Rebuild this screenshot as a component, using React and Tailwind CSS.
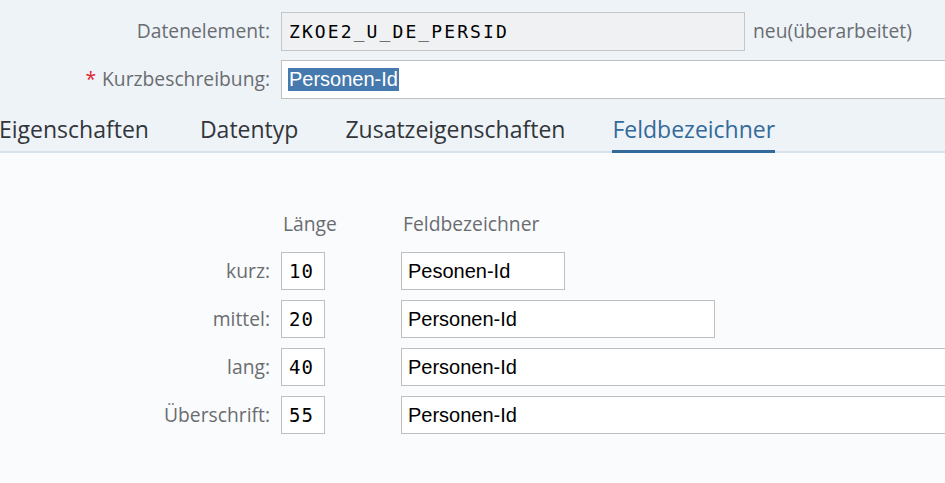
import React from 'react';

const sans = { fontFamily: '"Open Sans", "Noto Sans", sans-serif' };

const rows = [
  { label: 'kurz:', len: '10', text: 'Pesonen-Id', w: 'w-[164px]' },
  { label: 'mittel:', len: '20', text: 'Personen-Id', w: 'w-[314px]' },
  { label: 'lang:', len: '40', text: 'Personen-Id', w: 'w-[600px]' },
  { label: 'Überschrift:', len: '55', text: 'Personen-Id', w: 'w-[600px]' },
];

const tabs = [
  { t: 'Eigenschaften', ml: '' },
  { t: 'Datentyp', ml: 'ml-[51px]' },
  { t: 'Zusatzeigenschaften', ml: 'ml-[47px]' },
  { t: 'Feldbezeichner', ml: 'ml-[47px]' },
];

export default function App() {
  return (
    <div className="w-[945px] h-[483px] overflow-hidden bg-[#fafbfd]" style={sans}>
      {/* header */}
      <div className="bg-[#eef3f8] pt-[12px]">
        <div className="flex items-center h-[39px]">
          <div className="w-[270px] shrink-0 text-right text-[19.3px] text-[#6a6d70]">Datenelement:</div>
          <div className="ml-[11px] w-[464px] shrink-0 h-full flex items-center pl-[7px] border border-[#c4c6c8] bg-[#eff1f2] text-[18px] tracking-[2.1px] text-black font-['DejaVu_Sans_Mono',monospace]">
            ZKOE2_U_DE_PERSID
          </div>
          <div className="ml-[8px] text-[19.3px] text-[#6a6d70] whitespace-nowrap">neu(überarbeitet)</div>
        </div>
        <div className="flex items-center h-[39px] mt-[9px]">
          <div className="w-[270px] shrink-0 text-right text-[19.3px] text-[#6a6d70] whitespace-nowrap">
            <span className="text-[#e0222f] mr-[6px]">*</span>Kurzbeschreibung:
          </div>
          <div className="ml-[11px] w-[700px] shrink-0 h-full flex items-center pl-[6px] border border-[#bfbfbf] bg-white text-[20px] font-['Liberation_Sans',Arial,sans-serif]">
            <span className="bg-[#4679ad] text-white leading-[23px] px-[1px]">Personen-Id</span>
          </div>
        </div>
        <div className="flex h-[54px] border-b-2 border-[#d7e1ea] -ml-[1px]">
          {tabs.map((t, i) => (
            <div
              key={t.t}
              className={
                'flex items-center pt-[10px] -mb-[2px] border-b-[3px] text-[23px] whitespace-nowrap ' + t.ml + ' ' +
                (i === 3 ? 'border-[#346a9a] text-[#346a9a]' : 'border-transparent text-[#32363a]')
              }
            >
              {t.t}
            </div>
          ))}
        </div>
      </div>

      {/* content */}
      <div className="pt-[58px]">
        <div className="flex items-center h-[26px] text-[19.3px] text-[#6a6d70] whitespace-nowrap">
          <div className="w-[270px] shrink-0" />
          <div className="ml-[11px] w-[44px] shrink-0 pl-[2px]">Länge</div>
          <div className="ml-[76px] pl-[2px]">Feldbezeichner</div>
        </div>
        <div className="mt-[15px] flex flex-col gap-[10px]">
          {rows.map(r => (
            <div key={r.label} className="flex items-center h-[38px]">
              <div className="w-[270px] shrink-0 text-right text-[19.3px] text-[#6a6d70]">{r.label}</div>
              <div className="ml-[11px] w-[44px] shrink-0 h-full flex items-center pl-[7px] border border-[#bfbfbf] bg-white text-[19px] tracking-[1px] text-black font-['DejaVu_Sans_Mono',monospace]">
                {r.len}
              </div>
              <div className={'ml-[76px] shrink-0 h-full flex items-center pl-[6px] border border-[#bfbfbf] bg-white text-[20px] text-black font-[\'Liberation_Sans\',Arial,sans-serif] ' + r.w}>
                {r.text}
              </div>
            </div>
          ))}
        </div>
      </div>
    </div>
  );
}
